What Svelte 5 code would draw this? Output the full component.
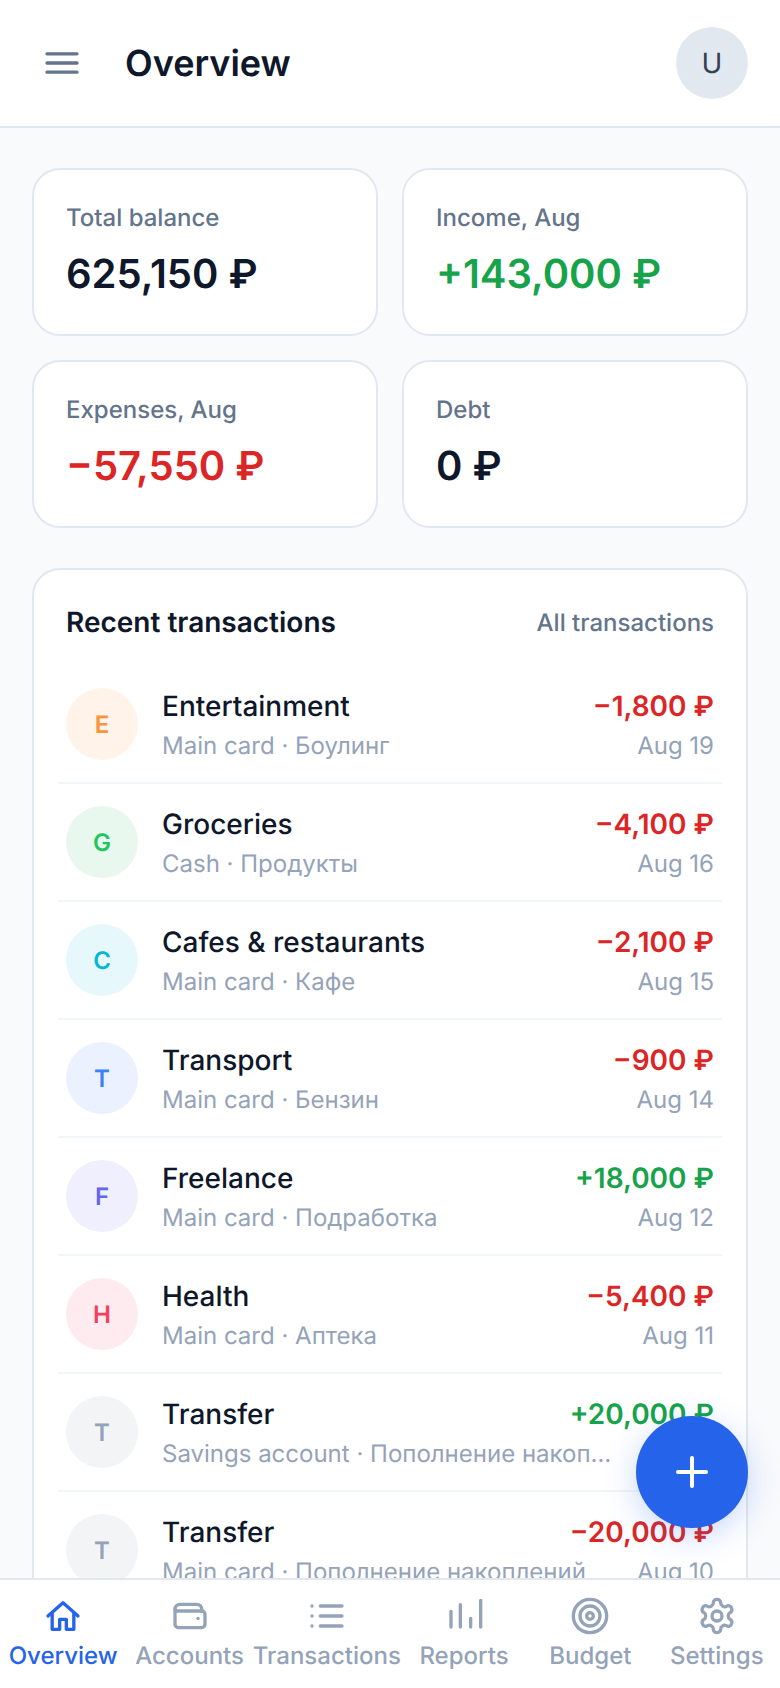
<script lang="ts">
	type Tx = {
		letter: string;
		bg: string;
		fg: string;
		name: string;
		sub: string;
		amount: string;
		positive?: boolean;
		date: string;
	};

	const stats = [
		{ label: 'Total balance', value: '625,150 ₽', tone: '' },
		{ label: 'Income, Aug', value: '+143,000 ₽', tone: 'pos' },
		{ label: 'Expenses, Aug', value: '−57,550 ₽', tone: 'neg' },
		{ label: 'Debt', value: '0 ₽', tone: '' }
	];

	const transactions: Tx[] = [
		{ letter: 'E', bg: '#fff3ea', fg: '#fb923c', name: 'Entertainment', sub: 'Main card · Боулинг', amount: '−1,800 ₽', date: 'Aug 19' },
		{ letter: 'G', bg: '#e8f8ef', fg: '#22c55e', name: 'Groceries', sub: 'Cash · Продукты', amount: '−4,100 ₽', date: 'Aug 16' },
		{ letter: 'C', bg: '#e6f8fc', fg: '#06b6d4', name: 'Cafes & restaurants', sub: 'Main card · Кафе', amount: '−2,100 ₽', date: 'Aug 15' },
		{ letter: 'T', bg: '#ebf1fe', fg: '#3b82f6', name: 'Transport', sub: 'Main card · Бензин', amount: '−900 ₽', date: 'Aug 14' },
		{ letter: 'F', bg: '#f0effe', fg: '#6366f1', name: 'Freelance', sub: 'Main card · Подработка', amount: '+18,000 ₽', positive: true, date: 'Aug 12' },
		{ letter: 'H', bg: '#fdebf0', fg: '#f43f5e', name: 'Health', sub: 'Main card · Аптека', amount: '−5,400 ₽', date: 'Aug 11' },
		{ letter: 'T', bg: '#f3f4f6', fg: '#94a3b8', name: 'Transfer', sub: 'Savings account · Пополнение накоплений', amount: '+20,000 ₽', positive: true, date: 'Aug 10' },
		{ letter: 'T', bg: '#f3f4f6', fg: '#94a3b8', name: 'Transfer', sub: 'Main card · Пополнение накоплений', amount: '−20,000 ₽', date: 'Aug 10' }
	];

	const tabs = ['Overview', 'Accounts', 'Transactions', 'Reports', 'Budget', 'Settings'];
</script>

<div class="app">
	<header class="topbar">
		<button class="menu" aria-label="Menu">
			<svg width="40" height="40" viewBox="0 0 24 24" fill="none" stroke="currentColor" stroke-width="2" stroke-linecap="round">
				<path d="M3 6.5h18M3 12h18M3 17.5h18" />
			</svg>
		</button>
		<h1>Overview</h1>
		<div class="avatar">U</div>
	</header>

	<main class="content">
		<section class="stats">
			{#each stats as s}
				<div class="stat">
					<div class="stat-label">{s.label}</div>
					<div class="stat-value {s.tone}">{s.value}</div>
				</div>
			{/each}
		</section>

		<section class="recent">
			<div class="recent-head">
				<h2>Recent transactions</h2>
				<span class="all">All transactions</span>
			</div>
			{#each transactions as t}
				<div class="tx">
					<div class="tx-icon" style="background:{t.bg};color:{t.fg}">{t.letter}</div>
					<div class="tx-main">
						<div class="tx-line">
							<div class="tx-name">{t.name}</div>
							<div class="tx-amount" class:pos={t.positive}>{t.amount}</div>
						</div>
						<div class="tx-line second">
							<div class="tx-sub">{t.sub}</div>
							<div class="tx-date">{t.date}</div>
						</div>
					</div>
				</div>
			{/each}
		</section>
	</main>

	<button class="fab" aria-label="Add">
		<svg width="48" height="48" viewBox="0 0 24 24" fill="none" stroke="currentColor" stroke-width="2" stroke-linecap="round">
			<path d="M12 5v14M5 12h14" />
		</svg>
	</button>

	<nav class="tabs">
		{#each tabs as tab, i}
			<div class="tab" class:active={i === 0}>
				<svg width="40" height="40" viewBox="0 0 24 24" fill="none" stroke="currentColor" stroke-width="2" stroke-linecap="round" stroke-linejoin="round">
					{#if i === 0}
						<path d="M3 12l9-8 9 8" />
						<path d="M5.5 10.5V20H10v-6h4v6h4.5v-9.5" />
					{:else if i === 1}
						<path d="M3 8a3 3 0 0 1 3-3h10a3 3 0 0 1 3 3v1" />
						<path d="M3 8v9a2 2 0 0 0 2 2h14a2 2 0 0 0 2-2v-6a2 2 0 0 0-2-2H5a2 2 0 0 1-2-1" />
						<path d="M16.8 13.5h.01" />
					{:else if i === 2}
						<path d="M8 6h13M8 12h13M8 18h13M3 6h.01M3 12h.01M3 18h.01" />
					{:else if i === 3}
						<path d="M4.2 18.6V9.2M9.8 18.6V5.2M16 18.6v-5.2M22 18.6v-16" />
					{:else if i === 4}
						<circle cx="12" cy="12" r="10" />
						<circle cx="12" cy="12" r="6" />
						<circle cx="12" cy="12" r="2" />
					{:else}
						<path d="M12.2 2h-.4a2 2 0 0 0-2 2v.2a2 2 0 0 1-1 1.7l-.4.3a2 2 0 0 1-2 0l-.2-.1a2 2 0 0 0-2.7.7l-.2.4a2 2 0 0 0 .7 2.7l.2.1a2 2 0 0 1 1 1.7v.5a2 2 0 0 1-1 1.8l-.2.1a2 2 0 0 0-.7 2.7l.2.4a2 2 0 0 0 2.7.7l.2-.1a2 2 0 0 1 2 0l.4.3a2 2 0 0 1 1 1.7v.2a2 2 0 0 0 2 2h.4a2 2 0 0 0 2-2v-.2a2 2 0 0 1 1-1.7l.4-.3a2 2 0 0 1 2 0l.2.1a2 2 0 0 0 2.7-.7l.2-.4a2 2 0 0 0-.7-2.7l-.2-.1a2 2 0 0 1-1-1.8v-.5a2 2 0 0 1 1-1.7l.2-.1a2 2 0 0 0 .7-2.7l-.2-.4a2 2 0 0 0-2.7-.7l-.2.1a2 2 0 0 1-2 0l-.4-.3a2 2 0 0 1-1-1.7V4a2 2 0 0 0-2-2Z" />
						<circle cx="12" cy="12" r="3" />
					{/if}
				</svg>
				<span>{tab}</span>
			</div>
		{/each}
	</nav>
</div>

<style>
	:global(body) {
		margin: 0;
		background: #f8fafc;
	}
	.app {
		position: relative;
		display: flex;
		flex-direction: column;
		width: 780px;
		height: 1688px;
		overflow: hidden;
		font-family: Inter, 'Noto Sans', sans-serif;
		font-variation-settings: 'opsz' 14;
		text-rendering: geometricPrecision;
		color: #0f172a;
		background: #f8fafc;
	}
	.topbar {
		display: flex;
		align-items: center;
		flex: none;
		box-sizing: border-box;
		height: 128px;
		padding: 0 32px 0 42px;
		background: #fff;
		border-bottom: 2px solid #e2e8f0;
	}
	.menu {
		display: flex;
		padding: 0;
		border: 0;
		background: none;
		color: #64748b;
	}
	h1 {
		flex: 1;
		margin: 0 0 0 43px;
		font-size: 36px;
		font-weight: 600;
		font-variation-settings: 'opsz' 18;
	}
	.avatar {
		display: flex;
		align-items: center;
		justify-content: center;
		width: 72px;
		height: 72px;
		border-radius: 50%;
		background: #e2e8f0;
		color: #334155;
		font-size: 28px;
		font-weight: 400;
	}
	.content {
		flex: 1;
		min-height: 0;
		overflow: hidden;
		padding: 40px 32px 0;
	}
	.stats {
		display: grid;
		grid-template-columns: 1fr 1fr;
		gap: 24px;
	}
	.stat {
		box-sizing: border-box;
		height: 168px;
		padding: 32px;
		background: #fff;
		border: 2px solid #e2e8f0;
		border-radius: 28px;
	}
	.stat-label {
		font-size: 24px;
		line-height: 32px;
		font-weight: 500;
		color: #64748b;
	}
	.stat-value {
		margin-top: 12px;
		font-size: 40px;
		line-height: 56px;
		font-weight: 600;
		font-variation-settings: 'opsz' 20;
	}
	.stat-value.pos {
		color: #16a34a;
	}
	.stat-value.neg {
		color: #dc2626;
	}
	.recent {
		margin-top: 40px;
		padding: 34px 24px 0;
		background: #fff;
		border: 2px solid #e2e8f0;
		border-radius: 28px;
	}
	.recent-head {
		display: flex;
		align-items: center;
		justify-content: space-between;
		padding: 0 8px;
		margin-bottom: 26px;
	}
	h2 {
		margin: 0;
		font-size: 28px;
		line-height: 36px;
		font-weight: 600;
	}
	.all {
		font-size: 24px;
		font-weight: 500;
		color: #64748b;
	}
	.tx {
		display: flex;
		align-items: center;
		gap: 24px;
		box-sizing: border-box;
		height: 118px;
		padding: 0 8px;
		border-bottom: 2px solid #f1f5f9;
	}
	.tx-icon {
		display: flex;
		align-items: center;
		justify-content: center;
		flex: none;
		width: 72px;
		height: 72px;
		border-radius: 50%;
		font-size: 24px;
		font-weight: 600;
	}
	.tx-main {
		flex: 1;
		min-width: 0;
		padding-top: 3px;
	}
	.tx-line {
		display: flex;
		justify-content: space-between;
		gap: 24px;
	}
	.tx-line.second {
		margin-top: 7px;
	}
	.tx-name {
		font-size: 28px;
		line-height: 34px;
		font-weight: 500;
		color: #0f172a;
		white-space: nowrap;
	}
	.tx-sub {
		min-width: 0;
		font-size: 24px;
		line-height: 32px;
		color: #94a3b8;
		white-space: nowrap;
		overflow: hidden;
		text-overflow: ellipsis;
	}
	.tx-amount {
		flex: none;
		font-size: 28px;
		line-height: 34px;
		font-weight: 600;
		color: #dc2626;
	}
	.tx-amount.pos {
		color: #16a34a;
	}
	.tx-date {
		flex: none;
		font-size: 24px;
		line-height: 32px;
		color: #94a3b8;
	}
	.fab {
		position: absolute;
		right: 32px;
		bottom: 160px;
		display: flex;
		align-items: center;
		justify-content: center;
		width: 112px;
		height: 112px;
		padding: 0;
		border: 0;
		border-radius: 50%;
		background: #2563eb;
		color: #fff;
		box-shadow: 0 8px 32px rgba(37, 99, 235, 0.25);
	}
	.tabs {
		display: flex;
		flex: none;
		box-sizing: border-box;
		height: 110px;
		background: #fff;
		border-top: 2px solid #e2e8f0;
	}
	.tab {
		display: flex;
		flex-direction: column;
		align-items: center;
		flex: 1 1 0;
		padding-top: 16px;
		gap: 5px;
		color: #94a3b8;
		font-size: 24px;
		line-height: 30px;
		font-weight: 500;
	}
	.tab.active {
		color: #2563eb;
	}
</style>
